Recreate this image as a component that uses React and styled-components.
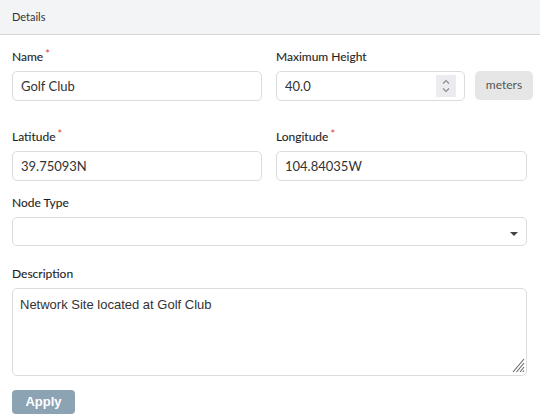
import React from "react";
import styled, { createGlobalStyle } from "styled-components";

const Global = createGlobalStyle`
  html, body { margin: 0; padding: 0; background: #fff; }
  body { font-family: Lato, "Liberation Sans", sans-serif; color: #333; }
  * { box-sizing: border-box; }
`;

const Panel = styled.div`
  width: 540px;
  height: 417px;
  overflow: hidden;
  background: #fff;
`;

const Header = styled.div`
  height: 35px;
  background: #f3f4f6;
  border-bottom: 1px solid #d6d6d8;
  display: flex;
  align-items: center;
  padding: 0 12px 2px;
  font-size: 11px;
  color: #333;
`;

const Body = styled.div`
  padding: 15px 13px 0 12px;
`;

const Grid = styled.div`
  display: grid;
  grid-template-columns: 250px 251px;
  column-gap: 14px;
  margin-bottom: ${(p) => p.$mb || 0}px;
`;

const Field = styled.div`
  display: flex;
  flex-direction: column;
  margin-bottom: ${(p) => p.$mb || 0}px;
`;

const Label = styled.label`
  font-size: 12px;
  font-weight: 400;
  line-height: 14px;
  color: #1e1e1e;
  margin-bottom: 7px;
  display: flex;
  align-items: flex-start;
  -webkit-text-stroke: 0.1px #1e1e1e;
`;

const Req = styled.span`
  color: #e53935;
  font-size: 11px;
  line-height: 8px;
  margin-left: 2px;
  -webkit-text-stroke: 0;
`;

const Input = styled.input`
  height: 30px;
  width: 100%;
  border: 1px solid #dcdcdc;
  border-radius: 5px;
  padding: 0 8px;
  font-family: Lato, "Liberation Sans", sans-serif;
  font-size: 13px;
  color: #333;
  outline: none;
  background: #fff;
`;

const UnitRow = styled.div`
  display: flex;
  align-items: stretch;
  gap: 10px;
`;

const NumberWrap = styled.div`
  position: relative;
  width: 189px;
  flex-shrink: 0;
`;

const Spinner = styled.div`
  position: absolute;
  right: 9px;
  top: 4px;
  width: 20px;
  height: 22px;
  background: #ebebf0;
  display: flex;
  align-items: center;
  justify-content: center;
`;

const Unit = styled.div`
  width: 58px;
  height: 29px;
  flex-shrink: 0;
  background: #e6e6e6;
  border-radius: 5px;
  color: #555;
  font-size: 12px;
  display: flex;
  align-items: center;
  justify-content: center;
  padding-bottom: 3px;
`;

const SelectBox = styled.div`
  position: relative;
  height: 29px;
  border: 1px solid #dcdcdc;
  border-radius: 5px;
  background: #fff;
`;

const Caret = styled.div`
  position: absolute;
  right: 8px;
  top: 14px;
  width: 0;
  height: 0;
  border-left: 4px solid transparent;
  border-right: 4px solid transparent;
  border-top: 4px solid #444;
`;

const AreaWrap = styled.div`
  position: relative;
  height: 88px;
`;

const TextArea = styled.textarea`
  width: 100%;
  height: 88px;
  border: 1px solid #dcdcdc;
  border-radius: 5px;
  padding: 8px 7px;
  font-family: "Liberation Sans", Arial, sans-serif;
  font-size: 13px;
  color: #333;
  resize: none;
  outline: none;
  display: block;
`;

const Grip = styled.svg`
  position: absolute;
  right: 2px;
  bottom: 3px;
  pointer-events: none;
`;

const Button = styled.button`
  margin-top: 14px;
  width: 63px;
  height: 24px;
  border: none;
  border-radius: 4px;
  background: #8ca3b4;
  color: #fff;
  font-family: "Liberation Sans", Arial, sans-serif;
  font-weight: bold;
  font-size: 13px;
  padding: 0 0 1px;
`;

export default function App() {
  return (
    <>
      <Global />
      <Panel>
        <Header>Details</Header>
        <Body>
          <Grid $mb={29}>
            <Field>
              <Label>
                Name<Req>*</Req>
              </Label>
              <Input defaultValue="Golf Club" />
            </Field>
            <Field>
              <Label>Maximum Height</Label>
              <UnitRow>
                <NumberWrap>
                  <Input defaultValue="40.0" />
                  <Spinner>
                    <svg width="12" height="18" viewBox="0 0 12 18">
                      <path d="M3 6.5 L6 3.5 L9 6.5" fill="none" stroke="#8a8a8a" strokeWidth="1.1" />
                      <path d="M3 11.5 L6 14.5 L9 11.5" fill="none" stroke="#8a8a8a" strokeWidth="1.1" />
                    </svg>
                  </Spinner>
                </NumberWrap>
                <Unit>meters</Unit>
              </UnitRow>
            </Field>
          </Grid>
          <Grid $mb={15}>
            <Field>
              <Label>
                Latitude<Req>*</Req>
              </Label>
              <Input defaultValue="39.75093N" />
            </Field>
            <Field>
              <Label>
                Longitude<Req>*</Req>
              </Label>
              <Input defaultValue="104.84035W" />
            </Field>
          </Grid>
          <Field $mb={21}>
            <Label>Node Type</Label>
            <SelectBox>
              <Caret />
            </SelectBox>
          </Field>
          <Field>
            <Label>Description</Label>
            <AreaWrap>
              <TextArea defaultValue="Network Site located at Golf Club" />
              <Grip width="13" height="15" viewBox="0 0 13 15">
                <path d="M12 1 L1 14 M12 5 L4.5 14 M12 9 L8 14 M12 12.5 L10.8 14" stroke="#666" strokeWidth="1.1" />
              </Grip>
            </AreaWrap>
          </Field>
          <Button>Apply</Button>
        </Body>
      </Panel>
    </>
  );
}
